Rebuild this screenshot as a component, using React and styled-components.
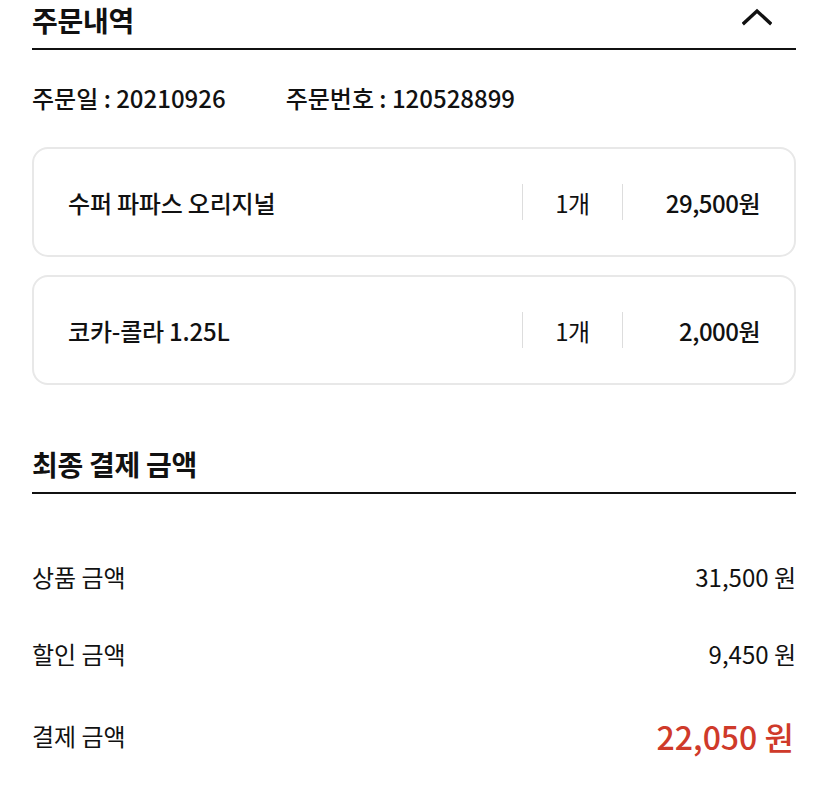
import React from "react";
import styled, { createGlobalStyle } from "styled-components";

const GlobalStyle = createGlobalStyle`
  body {
    margin: 0;
    background: #ffffff;
    font-family: "Noto Sans CJK KR", "Noto Sans", sans-serif;
    color: #111111;
  }
  * {
    box-sizing: border-box;
  }
`;

const Page = styled.div`
  padding: 0 32px;
  width: 828px;
`;

const SectionHeader = styled.div`
  display: flex;
  justify-content: space-between;
  align-items: center;
  height: 50px;
  padding-bottom: 8px;
  border-bottom: 2px solid #111111;
  margin-top: ${(props) => props.top || 0}px;
`;

const SectionTitle = styled.h2`
  margin: 0;
  font-size: 28px;
  font-weight: 700;
  letter-spacing: -0.3px;
  line-height: 1;
`;

const ToggleButton = styled.button`
  border: 0;
  background: none;
  padding: 0;
  margin-right: 24px;
  margin-top: -6px;
  display: flex;
  cursor: pointer;
`;

const OrderMeta = styled.div`
  display: flex;
  gap: 60px;
  margin: 33px 0 34px;
  font-size: 24px;
  line-height: 30px;
`;

const MetaItem = styled.span`
  font-weight: 500;
`;

const CardList = styled.div`
  display: flex;
  flex-direction: column;
  gap: 18px;
`;

const ItemCard = styled.div`
  display: grid;
  grid-template-columns: 1fr 100px 138px;
  align-items: center;
  height: 110px;
  border: 2px solid #e8e8e8;
  border-radius: 16px;
  padding: 0 34px;
`;

const ItemName = styled.span`
  font-size: 24px;
  font-weight: 500;
  letter-spacing: -0.2px;
`;

const ItemCell = styled.span`
  border-left: 1px solid #dddddd;
  height: 36px;
  display: flex;
  align-items: center;
  justify-content: ${(props) => (props.end ? "flex-end" : "center")};
  font-size: 24px;
  font-weight: ${(props) => (props.end ? 500 : 400)};
  letter-spacing: -0.5px;
`;

const SummaryList = styled.div`
  display: flex;
  flex-direction: column;
  padding-top: 44px;
`;

const SummaryRow = styled.div`
  display: flex;
  justify-content: space-between;
  align-items: center;
  height: ${(props) => (props.total ? 87 : 77)}px;
`;

const SummaryLabel = styled.span`
  font-size: 24px;
`;

const SummaryValue = styled.span`
  font-size: ${(props) => (props.total ? 32 : 24)}px;
  font-weight: ${(props) => (props.total ? 500 : 400)};
  color: ${(props) => (props.total ? "#cf3a2a" : "#111111")};
  margin-right: ${(props) => (props.total ? 2 : 0)}px;
`;

const ChevronUp = () => (
  <svg width="30" height="18" viewBox="0 0 30 18">
    <path d="M2 15 L15 3 L28 15" fill="none" stroke="#111" strokeWidth="3.4" strokeLinecap="square" strokeLinejoin="miter" />
  </svg>
);

const items = [
  { name: "수퍼 파파스 오리지널", qty: "1개", price: "29,500원" },
  { name: "코카-콜라 1.25L", qty: "1개", price: "2,000원" },
];

const summary = [
  { label: "상품 금액", value: "31,500 원" },
  { label: "할인 금액", value: "9,450 원" },
  { label: "결제 금액", value: "22,050 원", total: true },
];

export default function App() {
  return (
    <Page>
      <GlobalStyle />
      <SectionHeader>
        <SectionTitle>주문내역</SectionTitle>
        <ToggleButton aria-label="접기">
          <ChevronUp />
        </ToggleButton>
      </SectionHeader>

      <OrderMeta>
        <MetaItem>주문일 : 20210926</MetaItem>
        <MetaItem>주문번호 : 120528899</MetaItem>
      </OrderMeta>

      <CardList>
        {items.map((item) => (
          <ItemCard key={item.name}>
            <ItemName>{item.name}</ItemName>
            <ItemCell>{item.qty}</ItemCell>
            <ItemCell end>{item.price}</ItemCell>
          </ItemCard>
        ))}
      </CardList>

      <SectionHeader top={59}>
        <SectionTitle>최종 결제 금액</SectionTitle>
      </SectionHeader>

      <SummaryList>
        {summary.map((row) => (
          <SummaryRow key={row.label} total={row.total}>
            <SummaryLabel>{row.label}</SummaryLabel>
            <SummaryValue total={row.total}>{row.value}</SummaryValue>
          </SummaryRow>
        ))}
      </SummaryList>
    </Page>
  );
}
